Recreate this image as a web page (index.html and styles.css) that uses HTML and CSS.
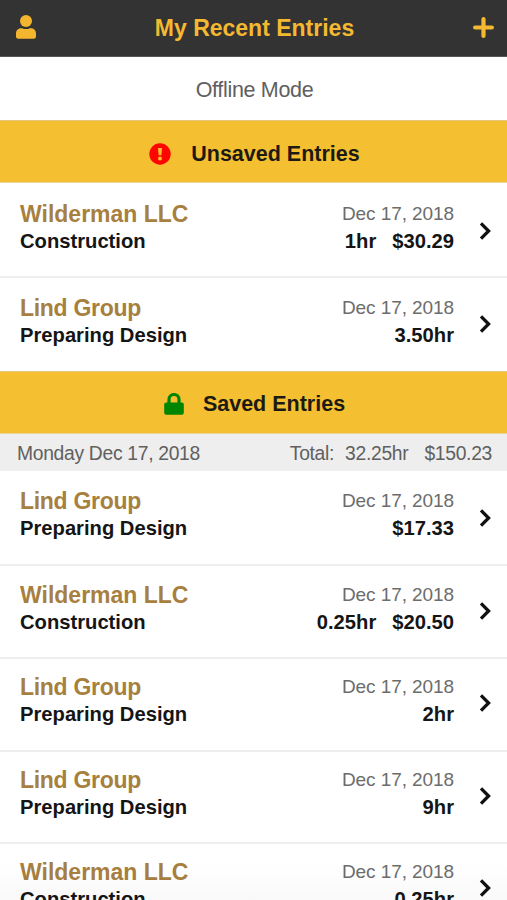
FILE: index.html
```html
<!DOCTYPE html>
<html lang="en">
<head>
<meta charset="utf-8">
<title>My Recent Entries</title>
<link rel="stylesheet" href="styles.css">
</head>
<body>
<svg class="symbols" width="0" height="0">
  <symbol id="chevron" viewBox="0 0 12 20"><path d="M2 2.300 9.600 10l-7.600 7.700" fill="none" stroke="#111" stroke-width="3.300"/></symbol>
</svg>
<div class="app">
  <header class="topbar">
    <svg class="user" viewBox="0 0 20 24"><circle cx="10" cy="6" r="6"/><path d="M5 13.200h1c2.600 1.200 5.400 1.200 8 0h1c3 0 5 2.300 5 5.300v3c0 1.300-.9 2.200-2.200 2.200H2.200C.9 23.700 0 22.800 0 21.500v-3c0-3 2-5.300 5-5.300z"/></svg>
    <h1>My Recent Entries</h1>
    <svg class="plus" viewBox="0 0 20 20"><path d="M10 2v16M2 10h16" fill="none" stroke-width="4" stroke-linecap="round"/></svg>
  </header>
  <div class="offline">Offline Mode</div>
  <section>
    <h2 class="band">
      <svg class="alert" viewBox="0 0 22 22"><circle cx="11" cy="11" r="10.700" fill="#ff0500"/><path d="M9 4.900h4l-.6 7.400H9.600z" fill="#f4bf31"/><circle cx="11" cy="15.500" r="2" fill="#f4bf31"/></svg>
      <span>Unsaved Entries</span>
    </h2>
    <ul>
      <li class="entry"><div class="job"><b>Wilderman LLC</b><span>Construction</span></div><div class="info"><time>Dec 17, 2018</time><div class="amounts"><span>1hr</span><span>$30.29</span></div></div><svg class="chevron"><use href="#chevron"/></svg></li>
      <li class="entry"><div class="job"><b class="tight">Lind Group</b><span>Preparing Design</span></div><div class="info"><time>Dec 17, 2018</time><div class="amounts"><span>3.50hr</span></div></div><svg class="chevron"><use href="#chevron"/></svg></li>
    </ul>
  </section>
  <section class="saved">
    <h2 class="band">
      <svg class="lock" viewBox="0 0 20 22"><path d="M5 10V6.500a5 5 0 0 1 10 0V10" fill="none" stroke="#008500" stroke-width="3.200"/><rect x=".2" y="9.500" width="19.600" height="12.300" rx="2" fill="#008500"/></svg>
      <span>Saved Entries</span>
    </h2>
    <div class="day"><span>Monday Dec 17, 2018</span><div class="totals"><span>Total:</span><span class="hours">32.25hr</span><span>$150.23</span></div></div>
    <ul>
      <li class="entry"><div class="job"><b class="tight">Lind Group</b><span>Preparing Design</span></div><div class="info"><time>Dec 17, 2018</time><div class="amounts"><span>$17.33</span></div></div><svg class="chevron"><use href="#chevron"/></svg></li>
      <li class="entry"><div class="job"><b>Wilderman LLC</b><span>Construction</span></div><div class="info"><time>Dec 17, 2018</time><div class="amounts"><span>0.25hr</span><span>$20.50</span></div></div><svg class="chevron"><use href="#chevron"/></svg></li>
      <li class="entry"><div class="job"><b class="tight">Lind Group</b><span>Preparing Design</span></div><div class="info"><time>Dec 17, 2018</time><div class="amounts"><span>2hr</span></div></div><svg class="chevron"><use href="#chevron"/></svg></li>
      <li class="entry"><div class="job"><b class="tight">Lind Group</b><span>Preparing Design</span></div><div class="info"><time>Dec 17, 2018</time><div class="amounts"><span>9hr</span></div></div><svg class="chevron"><use href="#chevron"/></svg></li>
      <li class="entry"><div class="job"><b>Wilderman LLC</b><span>Construction</span></div><div class="info"><time>Dec 17, 2018</time><div class="amounts"><span>0.25hr</span></div></div><svg class="chevron"><use href="#chevron"/></svg></li>
    </ul>
  </section>
  <div class="fade"></div>
</div>
</body>
</html>
```

FILE: styles.css
```css
* { box-sizing: border-box; }
body { margin: 0; background: #fff; font-family: "Liberation Sans", Arial, sans-serif; color: #151515; }
h1, h2, ul { margin: 0; padding: 0; list-style: none; }
.symbols { display: block; height: 0; }
.app { position: relative; height: 900px; overflow: hidden; }
.topbar { display: flex; justify-content: space-between; align-items: center; height: 57px; padding: 0 13px 2px 16px; background: #333; border-bottom: 1px solid #555; }
.topbar h1 { font-size: 23px; line-height: 28px; color: #f4b931; padding-top: 2px; }
.user { width: 20px; height: 24px; fill: #f4b62f; }
.plus { width: 21px; height: 21px; stroke: #f4b931; }
.offline { height: 63px; display: flex; align-items: center; justify-content: center; padding: 3px 0 0 2px; font-size: 21.5px; letter-spacing: -.33px; color: #606060; }
.band { height: 63px; display: flex; align-items: center; justify-content: center; padding: 4px 0 0 2px; gap: 20px; background: #f4bf31; border-top: 1px solid #e2c77d; border-bottom: 1px solid #ead49a; font-size: 21.5px; color: #1c1a12; }
.band span { padding-top: 2px; }
.saved .band { gap: 19px; padding-top: 3px; }
.alert { width: 22px; height: 22px; }
.lock { width: 20px; height: 22px; }
.entry { display: flex; align-items: flex-start; height: 92.6px; padding: 16px 16px 0 20px; border-bottom: 2px solid #eee; }
.entry:first-child { height: 95.4px; padding-top: 17px; }
.entry:last-child { border-bottom: 0; }
.saved .entry { padding-top: 14.2px; }
.saved .entry:first-child { padding-top: 16px; }
.job { flex: 1; display: flex; flex-direction: column; }
.job b { font-size: 23px; line-height: 28px; color: #a77f3f; }
.job .tight { letter-spacing: -.3px; }
.job span { font-size: 20.2px; font-weight: bold; line-height: 26px; }
.info { display: flex; flex-direction: column; align-items: flex-end; }
.info time { font-size: 19px; line-height: 28px; letter-spacing: -.08px; color: #6c6c6c; }
.amounts { display: flex; gap: 16px; font-size: 20.2px; font-weight: bold; line-height: 26px; }
.chevron { width: 12px; height: 20px; margin: 21px 0 0 25px; }
.entry + .entry .chevron { margin-top: 20px; }
.day { display: flex; justify-content: space-between; align-items: center; height: 37px; padding: 3px 15px 0 17px; background: #eee; font-size: 19.3px; letter-spacing: -.3px; color: #606060; }
.totals { display: flex; gap: 11px; }
.hours { margin-right: 5px; }
.fade { position: absolute; left: 0; right: 0; bottom: 0; height: 38px; background: linear-gradient(to bottom, rgba(0,0,0,0), rgba(0,0,0,.025)); }
```
